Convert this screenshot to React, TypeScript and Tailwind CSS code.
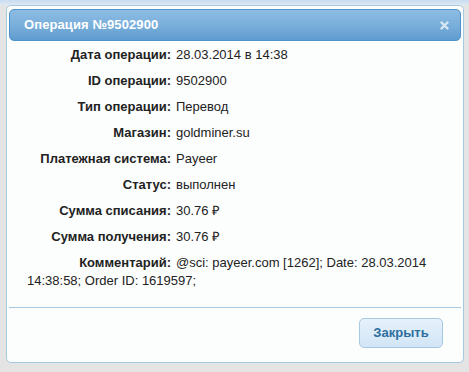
const rows: [string, string][] = [
  ["Дата операции:", "28.03.2014 в 14:38"],
  ["ID операции:", "9502900"],
  ["Тип операции:", "Перевод"],
  ["Магазин:", "goldminer.su"],
  ["Платежная система:", "Payeer"],
  ["Статус:", "выполнен"],
  ["Сумма списания:", "30.76 ₽"],
  ["Сумма получения:", "30.76 ₽"],
];

export default function App() {
  return (
    <div
      className="w-[469px] h-[372px] bg-[#e4e4e4] flex flex-col"
      style={{ fontFamily: '"Liberation Sans", Arial, sans-serif' }}
    >
      {/* полоска страницы сверху */}
      <div className="h-[5px] bg-gradient-to-b from-[#c9dcef] to-[#dde9f5]" />

      <div className="ml-[6px] w-[458px] h-[358px] rounded-[5px] border border-[#a6c9e2] bg-[#fcfdfd] p-[2px] flex flex-col">
        {/* заголовок */}
        <div className="relative h-[32px] mt-[1px] rounded-[5px] border border-[#4f92c9] bg-gradient-to-b from-[#8dbce3] via-[#79afdb] to-[#5f9ccf] flex items-center pl-[14px]">
          <span className="text-white font-bold text-[13px] tracking-[0.1px]">
            Операция №9502900
          </span>
          <span className="absolute right-[11px] top-[11px]">
            <svg width="9" height="9" viewBox="0 0 9 9">
              <path
                d="M1.5 1.5 L7.5 7.5 M7.5 1.5 L1.5 7.5"
                stroke="#dbe7f2"
                strokeWidth="2.4"
                strokeLinecap="round"
              />
            </svg>
          </span>
        </div>

        {/* содержимое */}
        <div className="pl-[18px] pr-[16px] pt-[5px] text-[13px] text-[#222] leading-[18px] h-[266px]">
          {rows.map(([label, value]) => (
            <div key={label} className="mb-[8px] flex">
              <span className="w-[144px] text-right font-bold shrink-0">{label}</span>
              <span className="ml-[5px]">{value}</span>
            </div>
          ))}
          {/* комментарий переносится под метку */}
          <div className="flex">
            <span className="w-[144px] text-right font-bold shrink-0">Комментарий:</span>
            <span className="ml-[5px]">@sci: payeer.com [1262]; Date: 28.03.2014</span>
          </div>
          <div>14:38:58; Order ID: 1619597;</div>
        </div>

        {/* низ */}
        <div className="border-t border-[#a6c9e2] flex justify-end pt-[10px] pr-[18px]">
          <button
            type="button"
            className="w-[84px] h-[30px] rounded-[5px] border border-[#a6c9e2] bg-gradient-to-b from-[#e6f1fb] to-[#d2e5f6] text-[#2e6e9e] font-bold text-[13px]"
          >
            Закрыть
          </button>
        </div>
      </div>
    </div>
  );
}
